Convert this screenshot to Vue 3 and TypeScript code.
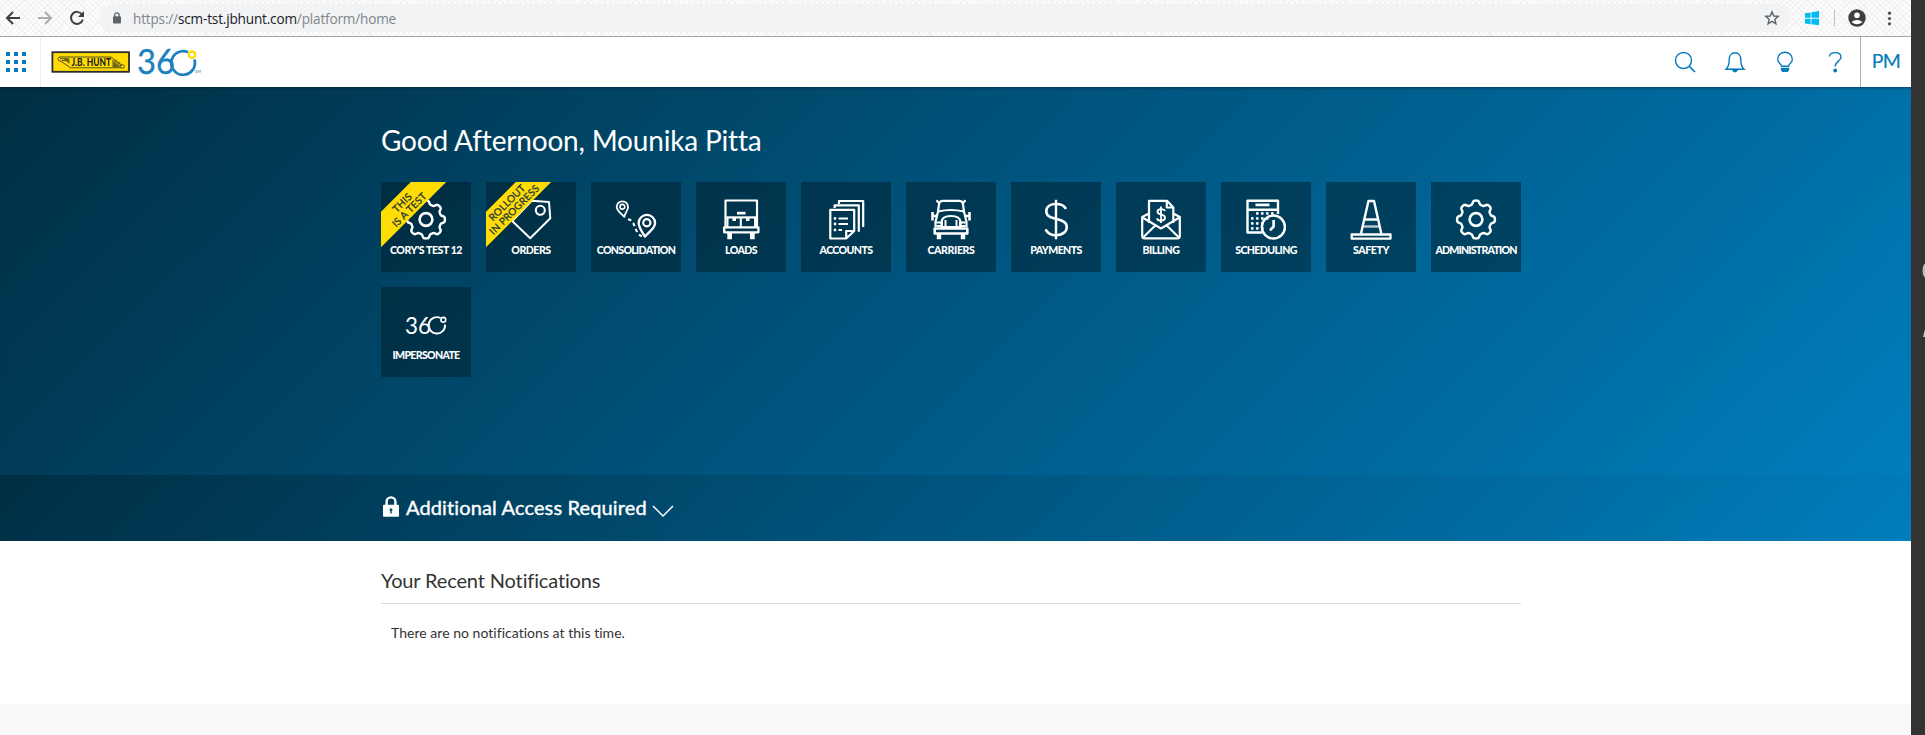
<script setup lang="ts">
interface Shape {
  d: string
  w?: number
  fill?: boolean
  dash?: string
  opacity?: number
}
interface Tile {
  label: string
  icon: string
  spacing: number
  ribbon?: string[]
}

const circle = (x: number, y: number, r: number): string =>
  `M${x - r} ${y}a${r} ${r} 0 1 0 ${2 * r} 0a${r} ${r} 0 1 0 ${-2 * r} 0Z`

const box = (x: number, y: number, w: number, h: number): string => `M${x} ${y}h${w}v${h}h${-w}Z`

function gearOutline(cx: number, cy: number): string {
  const points: string[] = []
  for (let i = 0; i < 160; i++) {
    const a = (i / 160) * Math.PI * 2
    const wave = Math.cos(8 * a)
    const r = 17.1 + 1.9 * Math.tanh(2 * wave)
    points.push(`${(cx + r * Math.sin(a)).toFixed(2)} ${(cy - r * Math.cos(a)).toFixed(2)}`)
  }
  return `M${points.join('L')}Z`
}

const calendarDots = [15.5, 20.5, 25.5, 30.5]
  .flatMap((y, row) =>
    [7.3, 12.3, 17.3, 22.3, 27.3]
      .filter((_, col) => (row === 0 ? col > 0 : col < 4 - (row > 1 ? 1 : 0)))
      .map((x) => circle(x, y, 1.4)),
  )
  .join('')

const gear: Shape[] = [{ d: gearOutline(21, 21.5), w: 2.4 }, { d: circle(21, 21.5, 6.4), w: 2.6 }]

const icons: Record<string, Shape[]> = {
  gear,
  tag: [
    { d: 'M21.7 2.8L39 4L40.3 20.3L20.2 40.3L2.2 23Z', w: 2 },
    { d: circle(30.3, 12.3, 4.5), w: 2.1 },
  ],
  pins: [
    { d: 'M9.3 18.8C5 14.5 1.7 12.5 1.7 9a5.7 5.7 0 0 1 11.4 0C13.1 12 10.3 14.5 9.3 18.8Z', w: 1.8 },
    { d: circle(7.4, 8.8, 2.4), w: 1.7 },
    { d: 'M30 38.6C26.5 33 23.7 29.5 23.7 25a8.2 8.2 0 0 1 16.4 0C40.1 30.5 34 33.5 30 38.6Z', w: 2.3 },
    { d: circle(31.8, 24.8, 3.6), w: 2.2 },
    { d: 'M13 21.2C22 23 18 36 28.5 38.8', w: 2.1, dash: '3.5 3' },
  ],
  dock: [
    { d: 'M5.5 29V2.5H37V29', w: 2.2 },
    { d: box(17, 13.8, 8.5, 2.7), fill: true },
    { d: box(5, 18.3, 32, 2.2), fill: true },
    { d: 'M7.5 20V29M20.8 19V29M35 20V29', w: 2 },
    { d: box(12.5, 19, 3.5, 4) + box(26, 19, 3.5, 4), fill: true },
    { d: box(4.2, 29.3, 34.2, 5), w: 2.3 },
    { d: box(7.3, 35, 4.7, 6.3) + box(30, 35, 4.7, 6.3), fill: true },
  ],
  papers: [
    { d: 'M29.2 33V11.8H5.3V40.5H21.2ZM21.2 40V33H29', w: 2.2 },
    { d: 'M9.6 10V7.3H33.8V33.8', w: 2.2 },
    { d: 'M14 6V3H38.2V29', w: 2.2 },
    { d: 'M13.5 20.5H23M13.5 26H23M13.5 32H17', w: 2.1 },
    { d: circle(10, 20.5, 1.4) + circle(10, 26, 1.4) + circle(10, 32, 1.4), fill: true },
  ],
  truck: [
    { d: 'M6.5 2.2L9.2 5.2L8 13.5L5.5 24V29M35.5 2.2L32.8 5.2L34 13.5L36.5 24V29', w: 2.2 },
    { d: 'M9.5 5Q10 2.8 13 2.8H29Q32 2.8 32.5 5M8 13.5Q21 10.5 34 13.5', w: 2.2 },
    { d: 'M11.5 24Q12 18 21 18T30.5 24V29H11.5Z', w: 2.2 },
    { d: 'M15.5 22V29M26.5 22V29', w: 2 },
    { d: 'M2.5 14V22.5M39.5 14V22.5M2.5 18H6M36 18H39.5', w: 2.6 },
    { d: 'M6.5 24.5H12V28H6.5M35.5 24.5H30V28H35.5', w: 2 },
    { d: box(4.7, 30.5, 32.6, 5), w: 2.6 },
    { d: box(6.8, 35.5, 4.4, 5.8) + box(30.8, 35.5, 4.4, 5.8), fill: true },
  ],
  dollar: [
    { d: 'M21 1.8V41.3', w: 2.4 },
    {
      d: 'M31 11C29.5 7.8 25.5 6 21 6C15 6 11.3 9 11.3 13.2C11.3 23.5 31.8 18.5 31.8 29C31.8 33.8 27.5 37.2 21 37.2C16 37.2 12.5 35 10.5 31.3',
      w: 2.6,
    },
  ],
  invoice: [
    { d: 'M9 25V2.8H27L33.3 9.5V25M26.8 3V9.5H33', w: 2.2 },
    { d: 'M9 15.5L2.2 19V38Q2.2 40.3 4.5 40.3H37.5Q39.8 40.3 39.8 38V19L33.3 15.5', w: 2.2 },
    { d: 'M2.5 19.5L21 30.5L39.5 19.5M3 39.5L15.3 27.5M39 39.5L26.7 27.5', w: 2.1 },
    { d: 'M21 8.5V25', w: 1.8 },
    { d: 'M25 13C24 10.5 17.5 10.2 17.5 13.7C17.5 17.4 25 15.5 25 19.6C25 23.6 18 23.5 16.8 20.3', w: 1.9 },
  ],
  calendar: [
    { d: 'M33 16V2.8H2.5V34.5H17M2.5 11.7H33', w: 2.4 },
    { d: 'M10.5 6.9H24.5', w: 2.7 },
    { d: calendarDots, fill: true },
    { d: circle(28.4, 29, 11.5), w: 2.4 },
    { d: 'M28.6 22V28.5L25 32.3', w: 2.6 },
  ],
  cone: [
    { d: box(1.7, 36.5, 38.8, 4.2), w: 2.3 },
    { d: 'M11 35.5L18.5 3H24L31.3 35.5', w: 2.4 },
    { d: 'M15 21.5H27.5', w: 2.5 },
    { d: 'M13 28.5H29.5', w: 2.5, opacity: 0.7 },
  ],
}

const tiles: Tile[] = [
  { label: "CORY'S TEST 12", icon: 'gear', spacing: -0.45, ribbon: ['THIS', 'IS A TEST'] },
  { label: 'ORDERS', icon: 'tag', spacing: -0.5, ribbon: ['ROLLOUT', 'IN PROGRESS'] },
  { label: 'CONSOLIDATION', icon: 'pins', spacing: -0.72 },
  { label: 'LOADS', icon: 'dock', spacing: -0.6 },
  { label: 'ACCOUNTS', icon: 'papers', spacing: -0.6 },
  { label: 'CARRIERS', icon: 'truck', spacing: -0.4 },
  { label: 'PAYMENTS', icon: 'dollar', spacing: -0.6 },
  { label: 'BILLING', icon: 'invoice', spacing: -0.5 },
  { label: 'SCHEDULING', icon: 'calendar', spacing: -0.6 },
  { label: 'SAFETY', icon: 'cone', spacing: -0.4 },
  { label: 'ADMINISTRATION', icon: 'gear', spacing: -0.8 },
  { label: 'IMPERSONATE', icon: 'threesixty', spacing: -0.7 },
]
</script>

<template>
  <div class="screen">
    <div class="window">
      <div class="browser">
        <svg class="nav" width="90" height="36" viewBox="0 0 90 36" fill="none" stroke-width="2">
          <path d="M20 18H7.5M13 12L7 18L13 24" stroke="#3c4043" />
          <path d="M38 18H50.5M45 12L51 18L45 24" stroke="#a9abad" />
          <path d="M82 14.5A6 6 0 1 0 82.8 19.5" stroke="#3c4043" />
          <path d="M84 11V17H78Z" fill="#3c4043" />
        </svg>
        <div class="address">
          <svg class="padlock" width="10" height="12" viewBox="0 0 10 12">
            <path d="M2.6 5V3.2a2.3 2.3 0 0 1 4.6 0V5" fill="none" stroke="#5f6368" stroke-width="1.3" />
            <rect x="1" y="4.3" width="8" height="7.2" rx="1" fill="#5f6368" />
          </svg>
          <span class="url">https://<b>scm-tst.jbhunt.com</b>/platform/home</span>
          <svg class="star" width="16" height="16" viewBox="0 0 16 16">
            <path d="M8 1.8L9.8 6L14.3 6.4L10.9 9.3L11.9 13.8L8 11.4L4.1 13.8L5.1 9.3L1.7 6.4L6.2 6Z" fill="none" stroke="#5f6368" stroke-width="1.4" />
          </svg>
        </div>
        <svg class="extras" width="121" height="36" viewBox="1790 0 121 36">
          <path d="M1805 13.2L1810.6 12.4V17.7H1805ZM1811.5 12.2L1819 11V17.7H1811.5ZM1805 18.7H1810.6V24.2L1805 23.4ZM1811.5 18.7H1819V25.3L1811.5 24.3Z" fill="#00bcf2" />
          <path d="M1834.5 10V26" stroke="#bcbec0" />
          <circle cx="1857" cy="18" r="8.7" fill="#3c4043" />
          <circle cx="1857" cy="15.2" r="2.8" fill="#fff" />
          <path d="M1851.5 22Q1857 17.8 1862.5 22Q1857 26.5 1851.5 22Z" fill="#fff" />
          <g fill="#4a4d50"><circle cx="1889.5" cy="13.2" r="1.6" /><circle cx="1889.5" cy="18.5" r="1.6" /><circle cx="1889.5" cy="23.8" r="1.6" /></g>
        </svg>
      </div>

      <header class="header">
        <div class="launcher">
          <div class="dots"><i v-for="n in 9" :key="n"></i></div>
        </div>
        <svg class="brand" width="160" height="50" viewBox="41 37 160 50">
          <rect x="52.4" y="52.2" width="76.6" height="19.6" fill="#ffdc04" stroke="#2c2c2c" stroke-width="1.8" />
          <path d="M59 57H111L121 64.5M59 57Q56 60.3 61 61.3L70.5 67.8H121M60 58.8H68M62 60.6H69M112 61H117M113 63H120M113 65H122" fill="none" stroke="#55501c" stroke-width="1" />
          <path d="M63 58.5H69.5V64ZM112.5 61V67.5H121Z" fill="#6f6815" />
          <circle cx="122.5" cy="66.5" r="1.8" fill="none" stroke="#55501c" />
          <text x="71.5" y="66.2" class="hunt" textLength="39.5" lengthAdjust="spacingAndGlyphs">J.B. HUNT</text>
          <text x="137" y="74.4" class="degrees" textLength="38" lengthAdjust="spacingAndGlyphs">36</text>
          <path d="M188 52.2A11.8 11.8 0 1 0 194.4 59.4" fill="none" stroke="#1c81bf" stroke-width="2.7" />
          <circle cx="192" cy="54.7" r="3.2" fill="none" stroke="#ffdc04" stroke-width="2.4" />
          <text x="195" y="73.2" class="mark">SM</text>
        </svg>
        <svg class="actions" width="190" height="50" viewBox="1670 37 190 50" fill="none" stroke="#087bbb" stroke-width="1.4">
          <circle cx="1683.5" cy="60.5" r="8" />
          <path d="M1689.3 66.3L1695 72" stroke-width="1.7" />
          <path d="M1726 69.3C1729 66.5 1729.2 64 1729.2 59.5C1729.2 55.5 1731.5 52.7 1735 52.7S1740.8 55.5 1740.8 59.5C1740.8 64 1741 66.5 1744 69.3Z" />
          <path d="M1732.3 69.5Q1735 74 1737.7 69.5Z" fill="#087bbb" />
          <path d="M1781.5 66.3C1781.5 63.6 1777.7 63.2 1777.7 59.5a7.3 7.3 0 0 1 14.6 0C1792.3 63.2 1788.5 63.6 1788.5 66.3Z" />
          <path d="M1780.8 67.8H1789.2V70L1787.7 72H1782.3L1780.8 70Z" fill="#087bbb" stroke="none" />
          <path d="M1829.3 56.5C1829.8 53.8 1832 52.6 1835.2 52.6C1838.8 52.6 1841 54.3 1841 57.2C1841 61.3 1835.2 61 1835.2 66.5" stroke-width="1.4" />
          <circle cx="1835.2" cy="70.5" r="1.3" fill="#087bbb" />
        </svg>
        <div class="user"><span>PM</span></div>
      </header>

      <section class="hero">
        <h1>Good Afternoon, Mounika Pitta</h1>
        <div class="tiles">
          <div v-for="tile in tiles" :key="tile.label" class="tile">
            <svg class="icon" width="42" height="42" viewBox="0 0 42 42">
              <template v-if="tile.icon === 'threesixty'">
                <text x="0" y="31" class="small-degrees" textLength="26" lengthAdjust="spacingAndGlyphs">36</text>
                <path d="M35.5 15A8.2 8.2 0 1 0 40 21.5" fill="none" stroke="#fff" stroke-width="1.9" />
                <circle cx="38.3" cy="16.8" r="2.4" fill="none" stroke="#fff" stroke-width="1.6" />
              </template>
              <template v-else>
                <path
                  v-for="(s, i) in icons[tile.icon]"
                  :key="i"
                  :d="s.d"
                  :fill="s.fill ? '#fff' : 'none'"
                  :stroke="s.fill ? 'none' : '#fff'"
                  :stroke-width="s.w"
                  :stroke-dasharray="s.dash"
                  :opacity="s.opacity"
                  stroke-linejoin="round"
                />
              </template>
            </svg>
            <span class="label" :style="{ letterSpacing: tile.spacing + 'px' }">{{ tile.label }}</span>
            <div v-if="tile.ribbon" class="ribbon">
              <span v-for="line in tile.ribbon" :key="line">{{ line }}</span>
            </div>
          </div>
        </div>
      </section>

      <section class="access">
        <svg class="lock" width="16" height="21" viewBox="0 0 16 21">
          <path d="M3.6 10V5.8a4.4 4.4 0 0 1 8.8 0V10" fill="none" stroke="#fff" stroke-width="2.4" />
          <rect width="16" height="12" y="8.7" rx="1" fill="#fff" />
          <path d="M6.7 12.5H9.3V14.8H8.7V17.5H7.3V14.8H6.7Z" fill="#004263" />
        </svg>
        <span class="access-title">Additional Access Required</span>
        <svg class="chevron" width="22" height="13" viewBox="0 0 22 13">
          <path d="M1 1L11 11L21 1" fill="none" stroke="#fff" stroke-width="1.5" />
        </svg>
      </section>

      <section class="notifications">
        <h2>Your Recent Notifications</h2>
        <p>There are no notifications at this time.</p>
      </section>
    </div>
    <aside class="edge">
      <svg width="14" height="90" viewBox="1911 255 14 90">
        <ellipse cx="1927" cy="270.5" rx="4.5" ry="8" fill="#bdbdbd" />
        <path d="M1923 337L1925 329V337Z" fill="#c4c4c4" />
      </svg>
    </aside>
  </div>
</template>

<style>
body {
  margin: 0;
  background: #f9f9f9;
}
</style>

<style scoped>
.screen {
  display: flex;
  height: 735px;
  overflow: hidden;
  font-family: Lato, "Open Sans", sans-serif;
  font-variant-ligatures: none;
}
.window {
  width: 1911px;
  height: 735px;
  background: #f9f9f9;
}
.edge {
  width: 14px;
  background: #333;
}
.edge svg {
  display: block;
  margin-top: 255px;
}
.browser {
  display: flex;
  box-sizing: border-box;
  height: 37px;
  border-bottom: 1px solid #a6a6a6;
  background:
    repeating-linear-gradient(45deg, transparent 0 3px, #f0f0f0 3px 4px),
    repeating-linear-gradient(-45deg, #fdfdfd 0 3px, #f2f2f2 3px 4px);
}
.nav {
  margin-right: 9px;
}
.address {
  display: flex;
  align-items: center;
  box-sizing: border-box;
  width: 1691px;
  height: 28px;
  margin-top: 4px;
  padding: 0 10px 0 13px;
  border-radius: 14px;
  background: #f1f3f4;
}
.url {
  margin: 0 auto 0 11px;
  color: #80868b;
  font: 13.6px "Open Sans", "Noto Sans", sans-serif;
  letter-spacing: -0.18px;
}
.url b {
  color: #202124;
  font-weight: 400;
}
.header {
  display: flex;
  height: 50px;
  background: #fff;
}
.launcher {
  box-sizing: border-box;
  width: 41px;
  padding: 15px 0 0 6px;
  border-right: 1px solid #ececec;
}
.dots {
  display: grid;
  grid-template-columns: repeat(3, 4px);
  gap: 4px;
}
.dots i {
  height: 4px;
  background: #087bbb;
}
.hunt {
  fill: #222;
  font: 900 10.8px Lato, sans-serif;
}
.degrees {
  fill: #1c81bf;
  stroke: #1c81bf;
  stroke-width: 0.3;
  font: 400 34px Lato, sans-serif;
}
.mark {
  fill: #1c81bf;
  font: 4px Lato, sans-serif;
}
.small-degrees {
  fill: #fff;
  font: 400 24px Lato, sans-serif;
}
.actions {
  margin-left: auto;
}
.user {
  display: flex;
  align-items: center;
  justify-content: center;
  box-sizing: border-box;
  width: 51px;
  padding-bottom: 3px;
  border-left: 1px solid #b0b0b0;
  color: #087bbb;
  font-size: 19.5px;
  letter-spacing: -0.6px;
  -webkit-text-stroke: 0.2px #087bbb;
}
.hero,
.access {
  box-sizing: border-box;
  background: linear-gradient(135deg, #002e43 0%, #007dbc 100%);
  color: #fff;
}
.hero {
  height: 388px;
  padding: 36px 390px 0 381px;
  box-shadow: inset 0 3px 3px -2px rgba(0, 15, 30, 0.45);
}
h1 {
  margin: 0;
  font-size: 28px;
  font-weight: 400;
  line-height: 34px;
  letter-spacing: -0.18px;
  white-space: nowrap;
}
.tiles {
  display: grid;
  grid-template-columns: repeat(11, 90px);
  gap: 15px;
  margin-top: 25px;
}
.tile {
  position: relative;
  display: flex;
  flex-direction: column;
  align-items: center;
  box-sizing: border-box;
  height: 90px;
  padding-top: 16px;
  overflow: hidden;
  background: rgba(0, 29, 41, 0.5);
}
.icon {
  display: block;
}
.label {
  margin-top: 4px;
  font-size: 10.6px;
  font-weight: 900;
  line-height: 13px;
  white-space: nowrap;
}
.ribbon {
  position: absolute;
  top: 11.3px;
  left: -41.3px;
  display: flex;
  flex-direction: column;
  justify-content: center;
  width: 130px;
  height: 25px;
  transform: rotate(-45deg);
  background: #ffdc04;
  color: #173040;
  font-size: 10px;
  line-height: 10px;
  letter-spacing: 0.2px;
  text-align: center;
  -webkit-text-stroke: 0.25px #173040;
}
.access {
  display: flex;
  height: 66px;
  padding: 20px 0 0 383px;
}
.lock {
  margin-top: 1px;
}
.access-title {
  margin-left: 7px;
  font-size: 20px;
  line-height: 24px;
  letter-spacing: 0.13px;
  -webkit-text-stroke: 0.4px #fff;
}
.chevron {
  margin: 10px 0 0 5px;
}
.notifications {
  box-sizing: border-box;
  height: 163px;
  padding: 26px 390px 0 381px;
  background: #fff;
  color: #333;
}
h2 {
  margin: 0;
  padding-bottom: 10px;
  border-bottom: 1px solid #dadada;
  font-size: 20px;
  font-weight: 400;
  line-height: 26px;
  letter-spacing: -0.14px;
}
p {
  margin: 18px 0 0 10px;
  font-size: 14px;
  line-height: 22px;
  letter-spacing: 0.03px;
}
</style>
